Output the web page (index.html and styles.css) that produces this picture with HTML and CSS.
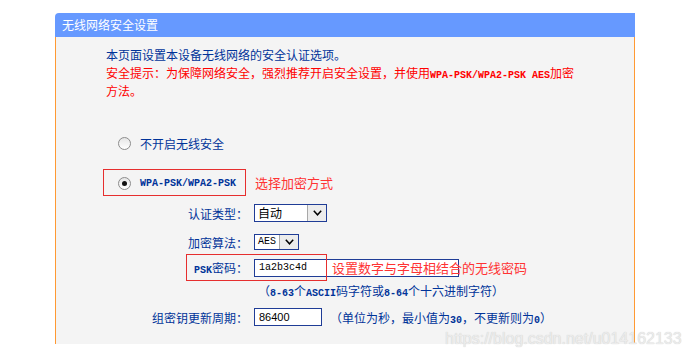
FILE: index.html
```html
<!DOCTYPE html>
<html lang="zh-CN">
<head>
    <meta charset="UTF-8">
    <meta name="viewport" content="width=device-width, initial-scale=1.0">
    <title>无线网络安全设置</title>
    <link rel="stylesheet" href="styles.css">
</head>
<body>
    <div class="panel">
        <div class="panel-title">无线网络安全设置</div>
        <div class="panel-body">
            <p class="intro">
                本页面设置本设备无线网络的安全认证选项。<br>
                <span class="warn">安全提示：为保障网络安全，强烈推荐开启安全设置，并使用<span class="mono">WPA-PSK/WPA2-PSK AES</span>加密<br>方法。</span>
            </p>

            <div class="option option-off">
                <span class="radio"></span>
                <span>不开启无线安全</span>
            </div>

            <div class="option-row">
                <div class="option option-wpa">
                    <span class="radio checked"></span>
                    <span class="mono">WPA-PSK/WPA2-PSK</span>
                </div>
                <span class="note">选择加密方式</span>
            </div>

            <div class="field field-auth">
                <span class="label">认证类型：</span>
                <span class="select select-auth">
                    <span class="select-text">自动</span>
                    <span class="select-btn">
                        <svg width="9" height="6" viewBox="0 0 9 6"><path d="M0.8 0.8 L4.5 4.8 L8.2 0.8" fill="none" stroke="#000" stroke-width="1.5"/></svg>
                    </span>
                </span>
            </div>

            <div class="field field-algo">
                <span class="label">加密算法：</span>
                <span class="select select-algo">
                    <span class="select-text mono">AES</span>
                    <span class="select-btn">
                        <svg width="9" height="6" viewBox="0 0 9 6"><path d="M0.8 0.8 L4.5 4.8 L8.2 0.8" fill="none" stroke="#000" stroke-width="1.5"/></svg>
                    </span>
                </span>
            </div>

            <div class="field field-psk">
                <span class="label"><span class="mono">PSK</span>密码：</span>
                <span class="input input-psk mono">1a2b3c4d</span>
                <span class="mark-box"></span>
                <span class="note note-psk">设置数字与字母相结合的无线密码</span>
            </div>

            <div class="hint hint-psk">（<span class="mono">8-63</span>个<span class="mono">ASCII</span>码字符或<span class="mono">8-64</span>个十六进制字符）</div>

            <div class="field field-group">
                <span class="label">组密钥更新周期：</span>
                <span class="input input-group">86400</span>
                <span class="hint hint-group">（单位为秒，最小值为<span class="mono">30</span>，不更新则为<span class="mono">0</span>）</span>
            </div>
        </div>
    </div>

    <div class="watermark">https://blog.csdn.net/u014162133</div>
</body>
</html>
```

FILE: styles.css
```css
body {
    margin: 0;
    background-color: #fff;
    font-family: "Noto Sans CJK SC", "Liberation Sans", sans-serif;
    font-size: 12px;
    color: #003399;
}
.mono {
    font-family: "Liberation Mono", "Noto Sans CJK SC", monospace;
    font-size: 10px;
    font-weight: bold;
    line-height: 10px;
}
.panel {
    width: 580px;
    margin: 13px 0 0 55px;
}
.panel-title {
    height: 24px;
    line-height: 24px;
    padding-left: 7px;
    background-color: #6699ff;
    border-top-left-radius: 4px;
    color: #fff;
    font-size: 12px;
}
.panel-body {
    height: 307px;
    box-sizing: border-box;
    background-color: #f4f4f4;
    border-left: 1px solid #ff9933;
    border-right: 1px solid #ff9933;
}
.intro {
    margin: 0;
    padding: 9px 0 0 50px;
    line-height: 18px;
}
.warn {
    color: #ff0000;
}
.option {
    display: flex;
    align-items: center;
    gap: 9px;
}
.option-off {
    height: 18px;
    margin-top: 34px;
    padding-left: 62px;
}
.radio {
    width: 11px;
    height: 11px;
    border: 1px solid #8c8c8c;
    border-radius: 50%;
    background: linear-gradient(#e6e6e6, #fff);
    display: flex;
    align-items: center;
    justify-content: center;
}
.radio.checked::after {
    content: "";
    width: 5px;
    height: 5px;
    border-radius: 50%;
    background-color: #111;
}
.option-row {
    display: flex;
    align-items: center;
    margin-top: 17px;
}
.option-wpa {
    box-sizing: border-box;
    width: 143px;
    height: 27px;
    margin-left: 47px;
    padding: 2px 0 0 14px;
    border: 1px solid #e62e2e;
}
.note {
    color: #ff3333;
    font-size: 13px;
}
.option-row .note {
    margin-left: 9px;
}
.field {
    display: flex;
    align-items: center;
}
.label {
    width: 192px;
    text-align: right;
    margin-right: 6px;
}
.field-auth {
    height: 18px;
    margin-top: 8px;
}
.field-algo {
    height: 16px;
    margin-top: 12px;
}
.field-psk {
    position: relative;
    height: 27px;
    margin-top: 4px;
}
.field-group {
    height: 18px;
    margin-top: 8px;
}
.select {
    display: flex;
    box-sizing: border-box;
    height: 100%;
    border: 1px solid #1f3c96;
    background-color: #fff;
    color: #000;
}
.select-auth {
    width: 73px;
}
.select-algo {
    width: 45px;
}
.select-text {
    flex: 1;
    padding-left: 3px;
    line-height: 16px;
}
.select-algo .select-text {
    line-height: 14px;
    font-weight: normal;
}
.select-btn {
    width: 18px;
    display: flex;
    align-items: center;
    justify-content: center;
    background-color: #ececec;
    border-left: 1px solid #a8a8a8;
}
.input {
    box-sizing: border-box;
    height: 18px;
    line-height: 16px;
    padding-left: 4px;
    border: 1px solid #1f3c96;
    background-color: #fff;
    color: #000;
}
.input-psk {
    width: 205px;
    font-weight: normal;
}
.input-group {
    width: 68px;
    font-family: "Liberation Sans", sans-serif;
    font-size: 11px;
}
.mark-box {
    position: absolute;
    left: 130px;
    top: 0;
    width: 141px;
    height: 27px;
    box-sizing: border-box;
    border: 1px solid #e62e2e;
}
.note-psk {
    position: absolute;
    left: 276px;
    top: 0;
    line-height: 27px;
}
.hint-psk {
    height: 18px;
    line-height: 18px;
    margin-top: 1px;
    padding-left: 202px;
}
.hint-group {
    margin-left: 8px;
}
.watermark {
    position: absolute;
    left: 445px;
    top: 330px;
    font-family: "Liberation Sans", sans-serif;
    font-size: 16px;
    color: #ececec;
    text-shadow: 0 0 1px #c4c4c4;
}
```
